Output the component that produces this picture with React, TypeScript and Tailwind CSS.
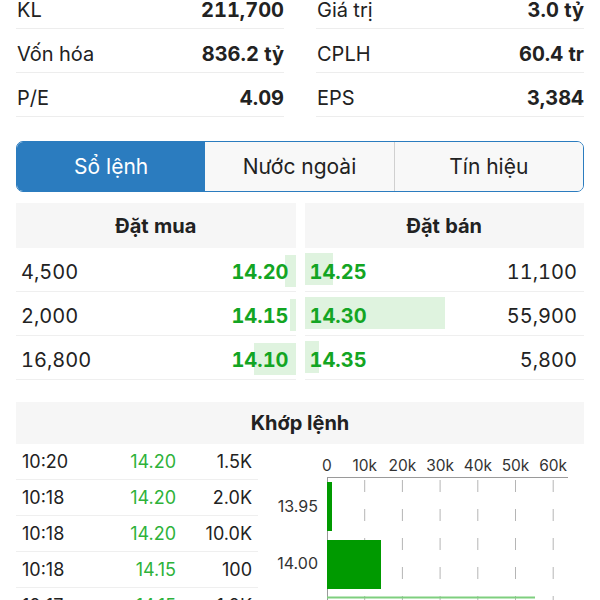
import React from "react";

const stats = [
  [
    { label: "KL", value: "211,700" },
    { label: "Vốn hóa", value: "836.2 tỷ" },
    { label: "P/E", value: "4.09" },
  ],
  [
    { label: "Giá trị", value: "3.0 tỷ" },
    { label: "CPLH", value: "60.4 tr" },
    { label: "EPS", value: "3,384" },
  ],
];

const bids = [
  { qty: "4,500", price: "14.20", bar: 11 },
  { qty: "2,000", price: "14.15", bar: 6 },
  { qty: "16,800", price: "14.10", bar: 42 },
];

const asks = [
  { qty: "11,100", price: "14.25", bar: 28 },
  { qty: "55,900", price: "14.30", bar: 140 },
  { qty: "5,800", price: "14.35", bar: 14 },
];

const trades = [
  { time: "10:20", price: "14.20", vol: "1.5K" },
  { time: "10:18", price: "14.20", vol: "2.0K" },
  { time: "10:18", price: "14.20", vol: "10.0K" },
  { time: "10:18", price: "14.15", vol: "100" },
  { time: "10:17", price: "14.15", vol: "1.0K" },
];

const tabs = ["Sổ lệnh", "Nước ngoài", "Tín hiệu"];

// horizontal volume-by-price chart
const VolumeChart = () => {
  const ticks = ["0", "10k", "20k", "30k", "40k", "50k", "60k"];
  const x0 = 69;
  const step = 37.7;
  return (
    <svg width="326" height="160" className="overflow-visible" style={{ fontFamily: "Inter, sans-serif" }}>
      {ticks.map((t, i) => (
        <text key={t} x={x0 + i * step} y={27} textAnchor="middle" fontSize="15.5" fill="#333">
          {t}
        </text>
      ))}
      <line x1={x0} y1={33.5} x2={310} y2={33.5} stroke="#9a9a9a" strokeWidth="1" />
      {ticks.slice(1).map((t, i) => (
        <line
          key={t}
          x1={x0 + (i + 1) * step}
          y1={36}
          x2={x0 + (i + 1) * step}
          y2={160}
          stroke="#b5b5b5"
          strokeWidth="1"
          strokeDasharray="12 17"
        />
      ))}
      <line x1={x0 + 0.5} y1={33} x2={x0 + 0.5} y2={160} stroke="#9a9a9a" strokeWidth="1" />
      <rect x={x0} y={38} width={5} height={49} fill="#009a00" />
      <rect x={x0} y={96} width={54} height={49} fill="#009a00" />
      <line x1={x0} y1={153.5} x2={277} y2={153.5} stroke="#7fcf7f" strokeWidth="2" />
      <text x={60} y={68} textAnchor="end" fontSize="16" fill="#333">
        13.95
      </text>
      <text x={60} y={125} textAnchor="end" fontSize="16" fill="#333">
        14.00
      </text>
    </svg>
  );
};

export default function App() {
  return (
    <div className="w-[600px] h-[600px] overflow-hidden bg-white text-[#222] font-['Inter',sans-serif]">
      {/* Stats */}
      <div className="-mt-[15px] px-4 grid grid-cols-2 gap-x-8 tabular-nums">
        {stats.map((col, ci) => (
          <div key={ci} className="flex flex-col">
            {col.map((s) => (
              <div key={s.label} className="h-[44px] pt-[6px] flex items-center justify-between border-b border-[#ededed] text-[20px]">
                <span className="pl-px">{s.label}</span>
                <span className="font-bold">{s.value}</span>
              </div>
            ))}
          </div>
        ))}
      </div>

      {/* Tabs */}
      <div className="mx-4 mt-6 h-[51px] flex rounded-[7px] border-[1.5px] border-[#2b7cbf] overflow-hidden text-[21px]">
        {tabs.map((t, i) => (
          <div
            key={t}
            className={
              i === 0
                ? "flex-1 flex items-center justify-center bg-[#2b7cbf] text-white"
                : i === 1
                ? "flex-1 flex items-center justify-center bg-[#f8f8f8]"
                : "flex-1 flex items-center justify-center bg-[#f8f8f8] border-l border-[#d0d0d0]"
            }
          >
            {t}
          </div>
        ))}
      </div>

      {/* Order book */}
      <div className="mx-4 mt-[11px] flex gap-[9px] text-[20px] tabular-nums">
        <div className="flex-1 flex flex-col">
          <div className="h-[45px] bg-[#f6f6f6] flex items-center justify-center font-bold">Đặt mua</div>
          {bids.map((b) => (
            <div key={b.price} className="relative h-[44px] pt-[4px] border-b border-[#efefef] flex items-center justify-between pl-[5px] pr-[7px]">
              <div className="absolute right-0 top-[7px] h-[32px] bg-[#dff3df]" style={{ width: b.bar }} />
              <span className="relative">{b.qty}</span>
              <span className="relative font-bold text-[#13a523]">{b.price}</span>
            </div>
          ))}
        </div>
        <div className="flex-1 flex flex-col">
          <div className="h-[45px] bg-[#f6f6f6] flex items-center justify-center font-bold">Đặt bán</div>
          {asks.map((a) => (
            <div key={a.price} className="relative h-[44px] pt-[4px] border-b border-[#efefef] flex items-center justify-between pl-[5px] pr-[7px]">
              <div className="absolute left-0 top-[5px] h-[32px] bg-[#dff3df]" style={{ width: a.bar }} />
              <span className="relative font-bold text-[#13a523]">{a.price}</span>
              <span className="relative">{a.qty}</span>
            </div>
          ))}
        </div>
      </div>

      {/* Matched orders */}
      <div className="mx-4 mt-[22px]">
        <div className="h-[42px] bg-[#f6f6f6] flex items-center justify-center font-bold text-[20px]">Khớp lệnh</div>
        <div className="flex">
          <div className="w-[242px] flex flex-col text-[18px]">
            {trades.map((t, i) => (
              <div key={i} className="h-[36px] border-b border-[#efefef] grid grid-cols-[90px_70px_76px] items-center">
                <span className="pl-[6px]">{t.time}</span>
                <span className="text-right text-[#2eb23a]">{t.price}</span>
                <span className="text-right">{t.vol}</span>
              </div>
            ))}
          </div>
          <VolumeChart />
        </div>
      </div>
    </div>
  );
}
